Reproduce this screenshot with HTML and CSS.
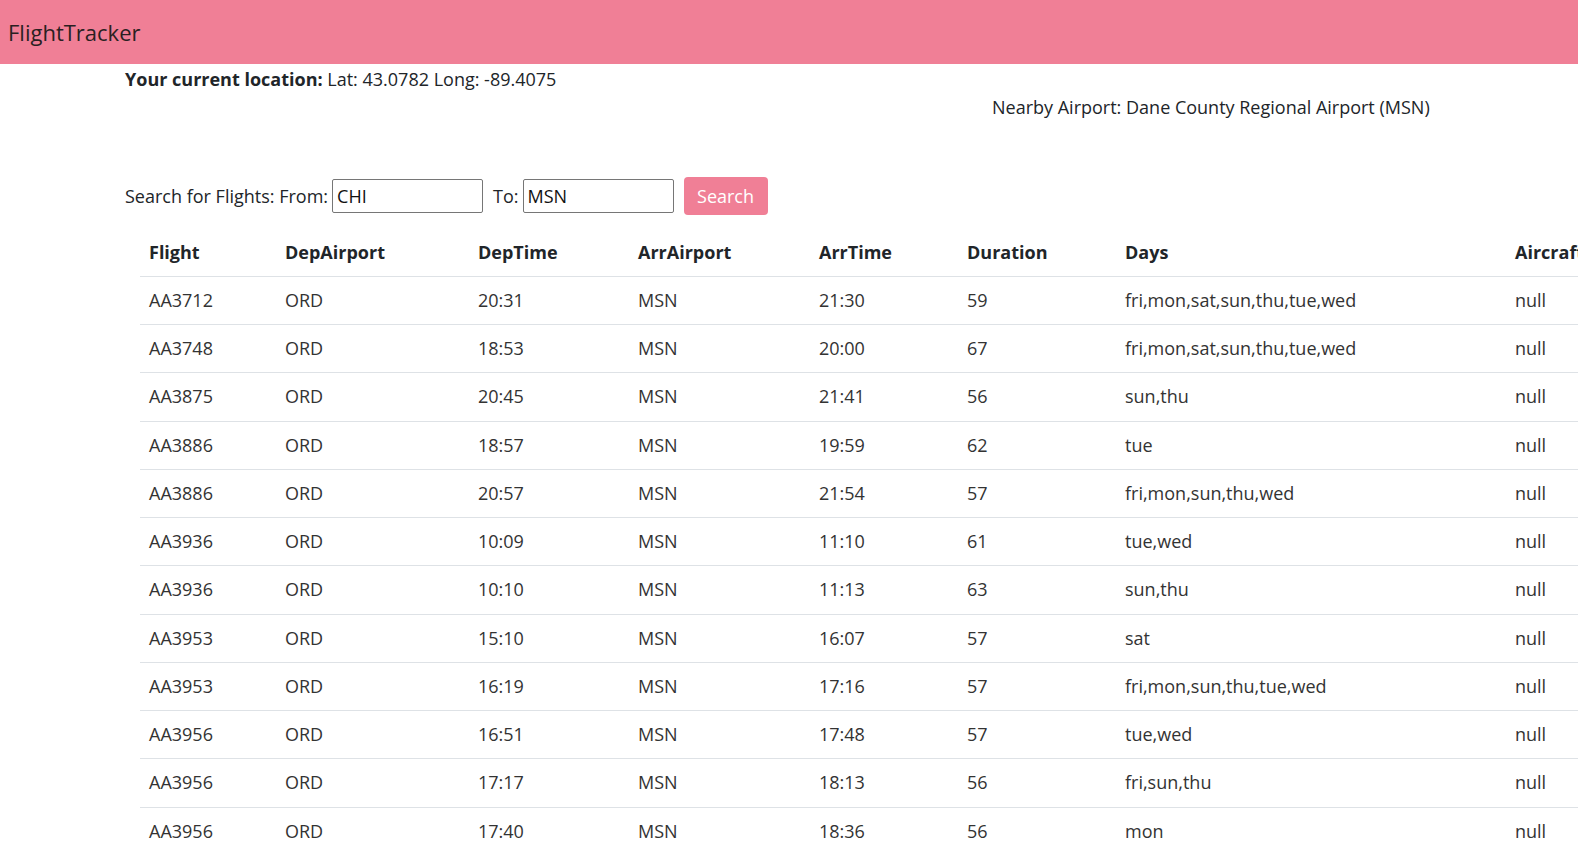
FILE: index.html
```html
<!DOCTYPE html>
<html>
<head>
<meta charset="utf-8">
<link rel="stylesheet" href="styles.css">
</head>
<body>
<nav class="navbar"><span class="brand">FlightTracker</span></nav>
<main class="content">
  <p class="location"><strong>Your current location:</strong> Lat: 43.0782 Long: -89.4075</p>
  <p class="nearby">Nearby Airport: Dane County Regional Airport (MSN)</p>
  <form class="search">
    <label>Search for Flights: From:</label>
    <input class="field" type="text" value="CHI">
    <label class="to">To:</label>
    <input class="field" type="text" value="MSN">
    <button class="btn" type="button">Search</button>
  </form>
  <table class="flights">
    <colgroup>
      <col class="c1"><col class="c2"><col class="c3"><col class="c4"><col class="c5"><col class="c6"><col class="c7"><col class="c8">
    </colgroup>
    <thead>
      <tr><th>Flight</th><th>DepAirport</th><th>DepTime</th><th>ArrAirport</th><th>ArrTime</th><th>Duration</th><th>Days</th><th>Aircraft</th></tr>
    </thead>
    <tbody>
      <tr><td>AA3712</td><td>ORD</td><td>20:31</td><td>MSN</td><td>21:30</td><td>59</td><td>fri,mon,sat,sun,thu,tue,wed</td><td>null</td></tr>
      <tr><td>AA3748</td><td>ORD</td><td>18:53</td><td>MSN</td><td>20:00</td><td>67</td><td>fri,mon,sat,sun,thu,tue,wed</td><td>null</td></tr>
      <tr><td>AA3875</td><td>ORD</td><td>20:45</td><td>MSN</td><td>21:41</td><td>56</td><td>sun,thu</td><td>null</td></tr>
      <tr><td>AA3886</td><td>ORD</td><td>18:57</td><td>MSN</td><td>19:59</td><td>62</td><td>tue</td><td>null</td></tr>
      <tr><td>AA3886</td><td>ORD</td><td>20:57</td><td>MSN</td><td>21:54</td><td>57</td><td>fri,mon,sun,thu,wed</td><td>null</td></tr>
      <tr><td>AA3936</td><td>ORD</td><td>10:09</td><td>MSN</td><td>11:10</td><td>61</td><td>tue,wed</td><td>null</td></tr>
      <tr><td>AA3936</td><td>ORD</td><td>10:10</td><td>MSN</td><td>11:13</td><td>63</td><td>sun,thu</td><td>null</td></tr>
      <tr><td>AA3953</td><td>ORD</td><td>15:10</td><td>MSN</td><td>16:07</td><td>57</td><td>sat</td><td>null</td></tr>
      <tr><td>AA3953</td><td>ORD</td><td>16:19</td><td>MSN</td><td>17:16</td><td>57</td><td>fri,mon,sun,thu,tue,wed</td><td>null</td></tr>
      <tr><td>AA3956</td><td>ORD</td><td>16:51</td><td>MSN</td><td>17:48</td><td>57</td><td>tue,wed</td><td>null</td></tr>
      <tr><td>AA3956</td><td>ORD</td><td>17:17</td><td>MSN</td><td>18:13</td><td>56</td><td>fri,sun,thu</td><td>null</td></tr>
      <tr><td>AA3956</td><td>ORD</td><td>17:40</td><td>MSN</td><td>18:36</td><td>56</td><td>mon</td><td>null</td></tr>
    </tbody>
  </table>
</main>
</body>
</html>
```

FILE: styles.css
```css
html, body {
  margin: 0;
  padding: 0;
  overflow: hidden;
}
body {
  font-family: "Open Sans", "Noto Sans", sans-serif;
  font-size: 18px;
  color: #212529;
  background: #fff;
}
.navbar {
  height: 63.5px;
  background: #f07f96;
  display: flex;
  align-items: center;
  padding-left: 8px;
}
.brand {
  font-size: 22px;
  color: #2a1f22;
}
.content {
  padding-left: 125px;
}
.location {
  margin: 2px 0 0 0;
  line-height: 26px;
}
.location strong {
  font-weight: 700;
}
.nearby {
  margin: 2px 0 0 867px;
  line-height: 26px;
}
.search {
  display: flex;
  align-items: center;
  margin-top: 57px;
  height: 38px;
}
.search label {
  margin-right: 4px;
}
.search .to {
  margin-left: 10px;
}
.field {
  width: 151px;
  height: 34px;
  box-sizing: border-box;
  border: 1px solid #767676;
  border-radius: 2px;
  padding: 0 4px;
  font-family: inherit;
  font-size: 18px;
  color: #111;
}
.btn {
  margin-left: 10px;
  width: 84px;
  height: 38px;
  border: none;
  border-radius: 4px;
  background: #f07f96;
  color: #fff;
  font-family: inherit;
  font-size: 18px;
}
.flights {
  margin: 14px 0 0 15px;
  border-collapse: collapse;
  table-layout: fixed;
  width: 1500px;
}
.c1 { width: 136px; }
.c2 { width: 193px; }
.c3 { width: 160px; }
.c4 { width: 181px; }
.c5 { width: 148px; }
.c6 { width: 158px; }
.c7 { width: 390px; }
.c8 { width: 134px; }
.flights th,
.flights td {
  text-align: left;
  padding: 11px 9px 12.27px 9px;
  line-height: 24px;
  border-bottom: 1px solid #dee2e6;
  white-space: nowrap;
}
.flights th {
  font-weight: 700;
}
.flights td {
  color: #333;
}
```
